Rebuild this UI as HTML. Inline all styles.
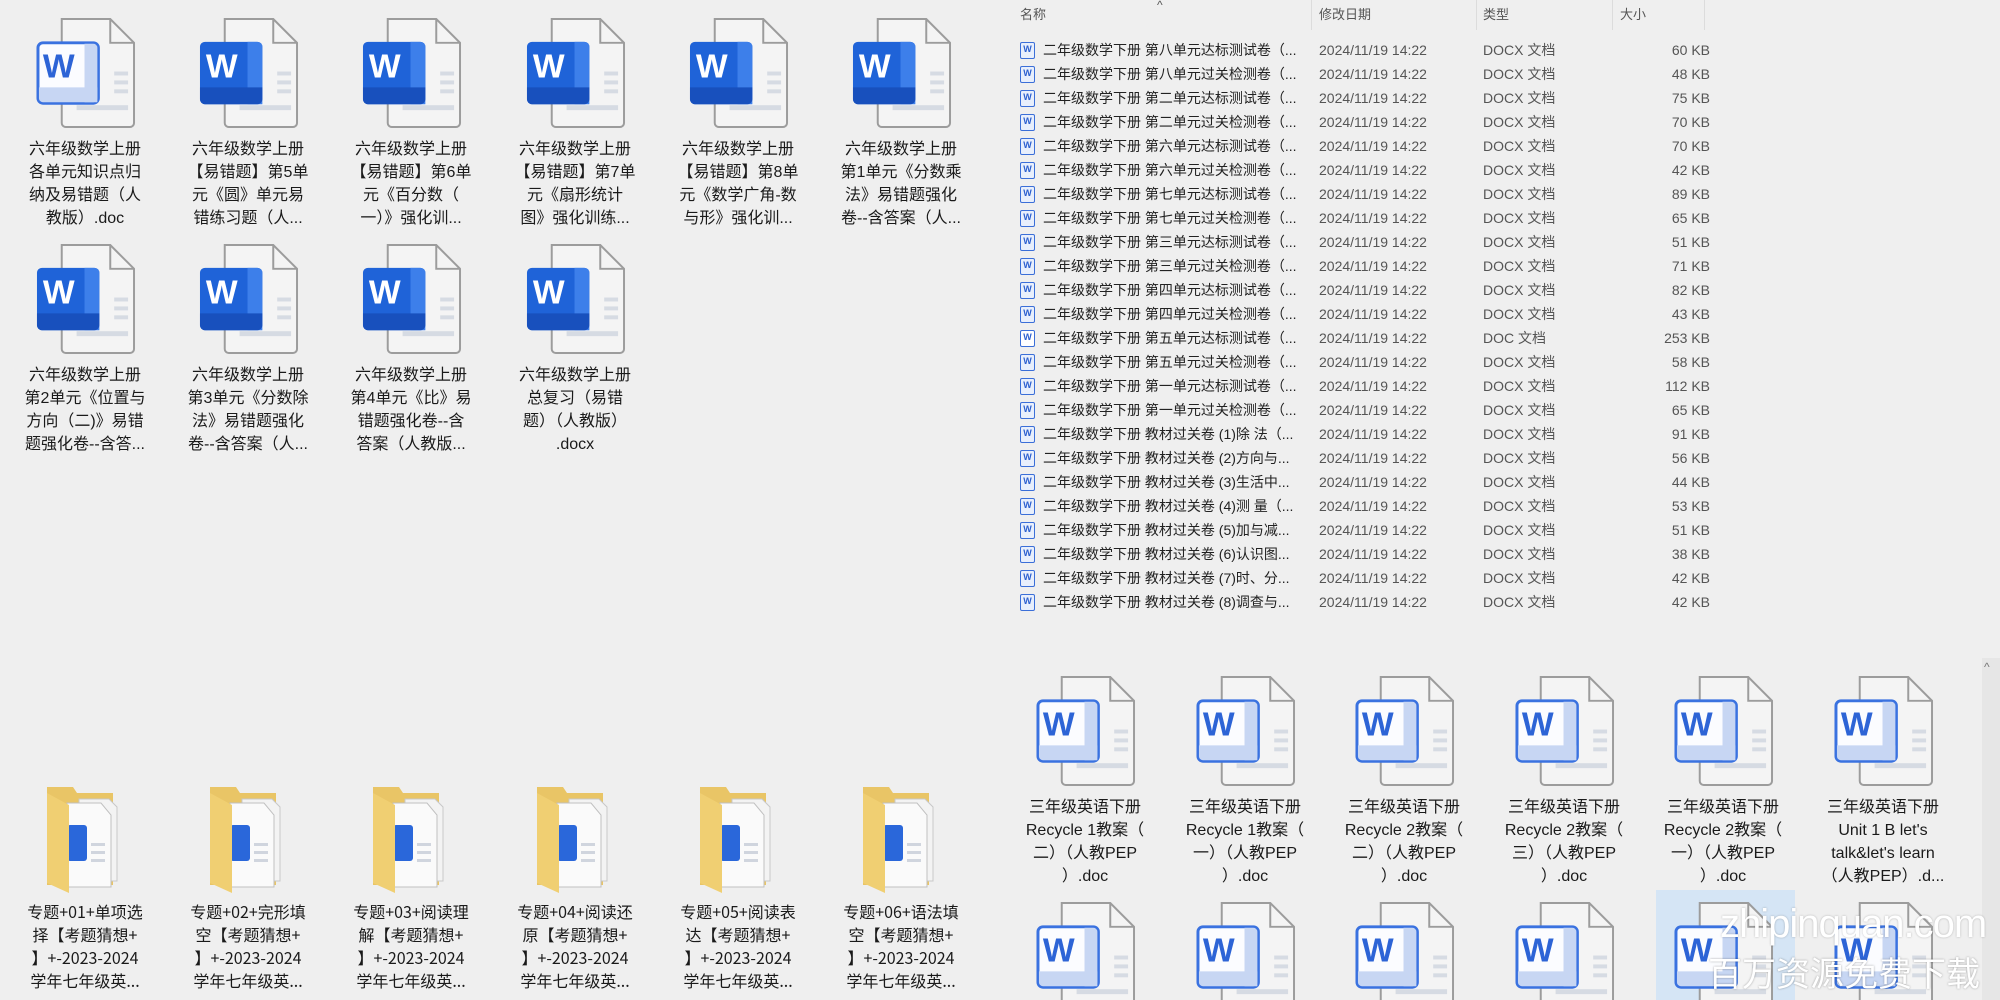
<!DOCTYPE html>
<html style="width:2000px;height:1000px;overflow:hidden"><head><meta charset="utf-8">
<style>
*{margin:0;padding:0;box-sizing:border-box}
body{width:2000px;height:1000px;background:#efefef;position:relative;overflow:hidden;font-family:"Liberation Sans","Noto Sans CJK SC",sans-serif;color:#1a1a1a}
.it{position:absolute;width:150px;text-align:center}
.it svg{display:block;margin:0 auto}
.cap{font-size:16px;line-height:23px;margin-top:9px;white-space:nowrap}
.cap2{font-size:16px;line-height:23px;margin-top:5px;white-space:nowrap;font-family:"Noto Sans CJK SC",sans-serif}
.hdr{position:absolute;top:0;height:30px;font-size:13px;color:#555;line-height:30px}
.sep{position:absolute;top:0;width:1px;height:30px;background:#dcdcdc}
.row{position:absolute;left:1020px;height:24px;font-size:14px;line-height:24px;width:690px;color:#222}
.row span{position:absolute;top:0;white-space:nowrap}
.row .ic{left:0;top:4px;width:15px;height:17px;border:1.5px solid #3b6fd8;border-radius:2px;background:#e8effc;font-size:9px;line-height:13px;text-align:center;color:#2b5fcf;font-weight:bold}
.row .n{left:23px}.row .d{left:299px;color:#555}.row .t{left:463px;color:#555}.row .s{right:0;color:#555}
</style></head><body>
<svg width="0" height="0" style="position:absolute">
<defs>
<symbol id="ds" viewBox="0 0 102 112">
<path d="M27 1H76L100 25V106a4 4 0 0 1-4 4H31a4 4 0 0 1-4-4Z" fill="#f4f4f4" stroke="#9c9c9c" stroke-width="2"/>
<path d="M76 1V25H100" fill="none" stroke="#9c9c9c" stroke-width="2"/>
<rect x="80" y="54" width="14" height="4" fill="#d6dbe3"/><rect x="80" y="63" width="14" height="4" fill="#d6dbe3"/><rect x="80" y="72" width="14" height="4" fill="#d6dbe3"/><rect x="42" y="88" width="52" height="5" fill="#d6dbe3"/>
<rect x="2" y="24" width="63" height="63" rx="5" fill="#1f63d8"/>
<path d="M50 24h10a5 5 0 0 1 5 5v58H50Z" fill="#3d7fea"/>
<path d="M2 70H65V82a5 5 0 0 1-5 5H7a5 5 0 0 1-5-5Z" fill="#1850bd"/>
<text x="24" y="60" font-family="Liberation Sans" font-weight="bold" font-size="34" fill="#fff" text-anchor="middle">W</text>
</symbol>
<symbol id="do" viewBox="0 0 102 112">
<path d="M27 1H76L100 25V106a4 4 0 0 1-4 4H31a4 4 0 0 1-4-4Z" fill="#f4f4f4" stroke="#9c9c9c" stroke-width="2"/>
<path d="M76 1V25H100" fill="none" stroke="#9c9c9c" stroke-width="2"/>
<rect x="80" y="54" width="14" height="4" fill="#d6dbe3"/><rect x="80" y="63" width="14" height="4" fill="#d6dbe3"/><rect x="80" y="72" width="14" height="4" fill="#d6dbe3"/><rect x="42" y="88" width="52" height="5" fill="#d6dbe3"/>
<rect x="3" y="25" width="61" height="61" rx="5" fill="#fbfcff" stroke="#3a72e0" stroke-width="3"/>
<path d="M50 26h9a4 4 0 0 1 4 4v55H50Z" fill="#c7d6f3"/>
<path d="M4 70H63V81a4 4 0 0 1-4 4H8a4 4 0 0 1-4-4Z" fill="#c7d6f3"/>
<text x="24" y="60" font-family="Liberation Sans" font-weight="bold" font-size="34" fill="#2d64d6" text-anchor="middle">W</text>
</symbol>
<symbol id="fo" viewBox="0 0 84 110">
<path d="M4 2H30L34 8H70V100H4Z" fill="#e9c566"/>
<path d="M36 14H66L74 22V96H36Z" fill="#f3f3f3" stroke="#c8c8c8"/>
<path d="M24 18H58L68 30V102H24Z" fill="#fafafa" stroke="#c0c0c0"/>
<rect x="24" y="40" width="20" height="36" rx="3" fill="#2a67da"/>
<rect x="48" y="58" width="14" height="3" fill="#d0d5de"/><rect x="48" y="66" width="14" height="3" fill="#d0d5de"/><rect x="48" y="74" width="14" height="3" fill="#d0d5de"/>
<path d="M4 8L26 20V108L4 98Z" fill="#f0cf72"/>
</symbol>
</defs></svg>

<div class="it" style="left:10px;top:18px"><svg width="101" height="111"><use href="#do"/></svg><div class="cap">六年级数学上册<br>各单元知识点归<br>纳及易错题（人<br>教版）.doc</div></div>
<div class="it" style="left:173px;top:18px"><svg width="101" height="111"><use href="#ds"/></svg><div class="cap">六年级数学上册<br>【易错题】第5单<br>元《圆》单元易<br>错练习题（人...</div></div>
<div class="it" style="left:336px;top:18px"><svg width="101" height="111"><use href="#ds"/></svg><div class="cap">六年级数学上册<br>【易错题】第6单<br>元《百分数（<br>一）》强化训...</div></div>
<div class="it" style="left:500px;top:18px"><svg width="101" height="111"><use href="#ds"/></svg><div class="cap">六年级数学上册<br>【易错题】第7单<br>元《扇形统计<br>图》强化训练...</div></div>
<div class="it" style="left:663px;top:18px"><svg width="101" height="111"><use href="#ds"/></svg><div class="cap">六年级数学上册<br>【易错题】第8单<br>元《数学广角-数<br>与形》强化训...</div></div>
<div class="it" style="left:826px;top:18px"><svg width="101" height="111"><use href="#ds"/></svg><div class="cap">六年级数学上册<br>第1单元《分数乘<br>法》易错题强化<br>卷--含答案（人...</div></div>
<div class="it" style="left:10px;top:244px"><svg width="101" height="111"><use href="#ds"/></svg><div class="cap">六年级数学上册<br>第2单元《位置与<br>方向（二)》易错<br>题强化卷--含答...</div></div>
<div class="it" style="left:173px;top:244px"><svg width="101" height="111"><use href="#ds"/></svg><div class="cap">六年级数学上册<br>第3单元《分数除<br>法》易错题强化<br>卷--含答案（人...</div></div>
<div class="it" style="left:336px;top:244px"><svg width="101" height="111"><use href="#ds"/></svg><div class="cap">六年级数学上册<br>第4单元《比》易<br>错题强化卷--含<br>答案（人教版...</div></div>
<div class="it" style="left:500px;top:244px"><svg width="101" height="111"><use href="#ds"/></svg><div class="cap">六年级数学上册<br>总复习（易错<br>题）（人教版）<br>.docx</div></div>

<div class="it" style="left:10px;top:785px"><svg width="84" height="110"><use href="#fo"/></svg><div class="cap2">专题+01+单项选<br>择【考题猜想+<br>】+-2023-2024<br>学年七年级英...</div></div>
<div class="it" style="left:173px;top:785px"><svg width="84" height="110"><use href="#fo"/></svg><div class="cap2">专题+02+完形填<br>空【考题猜想+<br>】+-2023-2024<br>学年七年级英...</div></div>
<div class="it" style="left:336px;top:785px"><svg width="84" height="110"><use href="#fo"/></svg><div class="cap2">专题+03+阅读理<br>解【考题猜想+<br>】+-2023-2024<br>学年七年级英...</div></div>
<div class="it" style="left:500px;top:785px"><svg width="84" height="110"><use href="#fo"/></svg><div class="cap2">专题+04+阅读还<br>原【考题猜想+<br>】+-2023-2024<br>学年七年级英...</div></div>
<div class="it" style="left:663px;top:785px"><svg width="84" height="110"><use href="#fo"/></svg><div class="cap2">专题+05+阅读表<br>达【考题猜想+<br>】+-2023-2024<br>学年七年级英...</div></div>
<div class="it" style="left:826px;top:785px"><svg width="84" height="110"><use href="#fo"/></svg><div class="cap2">专题+06+语法填<br>空【考题猜想+<br>】+-2023-2024<br>学年七年级英...</div></div>

<div class="hdr" style="left:1020px">名称</div>
<div class="hdr" style="left:1157px;top:-10px;font-size:12px">^</div>
<div class="hdr" style="left:1319px">修改日期</div>
<div class="hdr" style="left:1483px">类型</div>
<div class="hdr" style="left:1620px">大小</div>
<div class="sep" style="left:1311px"></div><div class="sep" style="left:1476px"></div><div class="sep" style="left:1612px"></div><div class="sep" style="left:1704px"></div>

<div class="row" style="top:38px"><span class="ic">W</span><span class="n">二年级数学下册  第八单元达标测试卷（...</span><span class="d">2024/11/19 14:22</span><span class="t">DOCX 文档</span><span class="s">60 KB</span></div>
<div class="row" style="top:62px"><span class="ic">W</span><span class="n">二年级数学下册  第八单元过关检测卷（...</span><span class="d">2024/11/19 14:22</span><span class="t">DOCX 文档</span><span class="s">48 KB</span></div>
<div class="row" style="top:86px"><span class="ic">W</span><span class="n">二年级数学下册  第二单元达标测试卷（...</span><span class="d">2024/11/19 14:22</span><span class="t">DOCX 文档</span><span class="s">75 KB</span></div>
<div class="row" style="top:110px"><span class="ic">W</span><span class="n">二年级数学下册  第二单元过关检测卷（...</span><span class="d">2024/11/19 14:22</span><span class="t">DOCX 文档</span><span class="s">70 KB</span></div>
<div class="row" style="top:134px"><span class="ic">W</span><span class="n">二年级数学下册  第六单元达标测试卷（...</span><span class="d">2024/11/19 14:22</span><span class="t">DOCX 文档</span><span class="s">70 KB</span></div>
<div class="row" style="top:158px"><span class="ic">W</span><span class="n">二年级数学下册  第六单元过关检测卷（...</span><span class="d">2024/11/19 14:22</span><span class="t">DOCX 文档</span><span class="s">42 KB</span></div>
<div class="row" style="top:182px"><span class="ic">W</span><span class="n">二年级数学下册  第七单元达标测试卷（...</span><span class="d">2024/11/19 14:22</span><span class="t">DOCX 文档</span><span class="s">89 KB</span></div>
<div class="row" style="top:206px"><span class="ic">W</span><span class="n">二年级数学下册  第七单元过关检测卷（...</span><span class="d">2024/11/19 14:22</span><span class="t">DOCX 文档</span><span class="s">65 KB</span></div>
<div class="row" style="top:230px"><span class="ic">W</span><span class="n">二年级数学下册  第三单元达标测试卷（...</span><span class="d">2024/11/19 14:22</span><span class="t">DOCX 文档</span><span class="s">51 KB</span></div>
<div class="row" style="top:254px"><span class="ic">W</span><span class="n">二年级数学下册  第三单元过关检测卷（...</span><span class="d">2024/11/19 14:22</span><span class="t">DOCX 文档</span><span class="s">71 KB</span></div>
<div class="row" style="top:278px"><span class="ic">W</span><span class="n">二年级数学下册  第四单元达标测试卷（...</span><span class="d">2024/11/19 14:22</span><span class="t">DOCX 文档</span><span class="s">82 KB</span></div>
<div class="row" style="top:302px"><span class="ic">W</span><span class="n">二年级数学下册  第四单元过关检测卷（...</span><span class="d">2024/11/19 14:22</span><span class="t">DOCX 文档</span><span class="s">43 KB</span></div>
<div class="row" style="top:326px"><span class="ic" style="background:#fff">W</span><span class="n">二年级数学下册  第五单元达标测试卷（...</span><span class="d">2024/11/19 14:22</span><span class="t">DOC 文档</span><span class="s">253 KB</span></div>
<div class="row" style="top:350px"><span class="ic">W</span><span class="n">二年级数学下册  第五单元过关检测卷（...</span><span class="d">2024/11/19 14:22</span><span class="t">DOCX 文档</span><span class="s">58 KB</span></div>
<div class="row" style="top:374px"><span class="ic">W</span><span class="n">二年级数学下册  第一单元达标测试卷（...</span><span class="d">2024/11/19 14:22</span><span class="t">DOCX 文档</span><span class="s">112 KB</span></div>
<div class="row" style="top:398px"><span class="ic">W</span><span class="n">二年级数学下册  第一单元过关检测卷（...</span><span class="d">2024/11/19 14:22</span><span class="t">DOCX 文档</span><span class="s">65 KB</span></div>
<div class="row" style="top:422px"><span class="ic">W</span><span class="n">二年级数学下册  教材过关卷 (1)除 法（...</span><span class="d">2024/11/19 14:22</span><span class="t">DOCX 文档</span><span class="s">91 KB</span></div>
<div class="row" style="top:446px"><span class="ic">W</span><span class="n">二年级数学下册  教材过关卷 (2)方向与...</span><span class="d">2024/11/19 14:22</span><span class="t">DOCX 文档</span><span class="s">56 KB</span></div>
<div class="row" style="top:470px"><span class="ic">W</span><span class="n">二年级数学下册  教材过关卷 (3)生活中...</span><span class="d">2024/11/19 14:22</span><span class="t">DOCX 文档</span><span class="s">44 KB</span></div>
<div class="row" style="top:494px"><span class="ic">W</span><span class="n">二年级数学下册  教材过关卷 (4)测 量（...</span><span class="d">2024/11/19 14:22</span><span class="t">DOCX 文档</span><span class="s">53 KB</span></div>
<div class="row" style="top:518px"><span class="ic">W</span><span class="n">二年级数学下册  教材过关卷 (5)加与减...</span><span class="d">2024/11/19 14:22</span><span class="t">DOCX 文档</span><span class="s">51 KB</span></div>
<div class="row" style="top:542px"><span class="ic">W</span><span class="n">二年级数学下册  教材过关卷 (6)认识图...</span><span class="d">2024/11/19 14:22</span><span class="t">DOCX 文档</span><span class="s">38 KB</span></div>
<div class="row" style="top:566px"><span class="ic">W</span><span class="n">二年级数学下册  教材过关卷 (7)时、分...</span><span class="d">2024/11/19 14:22</span><span class="t">DOCX 文档</span><span class="s">42 KB</span></div>
<div class="row" style="top:590px"><span class="ic">W</span><span class="n">二年级数学下册  教材过关卷 (8)调查与...</span><span class="d">2024/11/19 14:22</span><span class="t">DOCX 文档</span><span class="s">42 KB</span></div>

<div style="position:absolute;left:1656px;top:890px;width:139px;height:110px;background:#d5e5f5"></div>
<div class="it" style="left:1010px;top:676px"><svg width="101" height="111"><use href="#do"/></svg><div class="cap">三年级英语下册<br>Recycle 1教案（<br>二）（人教PEP<br>）.doc</div></div>
<div class="it" style="left:1170px;top:676px"><svg width="101" height="111"><use href="#do"/></svg><div class="cap">三年级英语下册<br>Recycle 1教案（<br>一）（人教PEP<br>）.doc</div></div>
<div class="it" style="left:1329px;top:676px"><svg width="101" height="111"><use href="#do"/></svg><div class="cap">三年级英语下册<br>Recycle 2教案（<br>二）（人教PEP<br>）.doc</div></div>
<div class="it" style="left:1489px;top:676px"><svg width="101" height="111"><use href="#do"/></svg><div class="cap">三年级英语下册<br>Recycle 2教案（<br>三）（人教PEP<br>）.doc</div></div>
<div class="it" style="left:1648px;top:676px"><svg width="101" height="111"><use href="#do"/></svg><div class="cap">三年级英语下册<br>Recycle 2教案（<br>一）（人教PEP<br>）.doc</div></div>
<div class="it" style="left:1808px;top:676px"><svg width="101" height="111"><use href="#do"/></svg><div class="cap">三年级英语下册<br>Unit 1 B let's<br>talk&amp;let's learn<br>（人教PEP）.d...</div></div>
<div class="it" style="left:1010px;top:902px"><svg width="101" height="111"><use href="#do"/></svg></div>
<div class="it" style="left:1170px;top:902px"><svg width="101" height="111"><use href="#do"/></svg></div>
<div class="it" style="left:1329px;top:902px"><svg width="101" height="111"><use href="#do"/></svg></div>
<div class="it" style="left:1489px;top:902px"><svg width="101" height="111"><use href="#do"/></svg></div>
<div class="it" style="left:1648px;top:902px"><svg width="101" height="111"><use href="#do"/></svg></div>
<div class="it" style="left:1808px;top:902px"><svg width="101" height="111"><use href="#do"/></svg></div>

<div style="position:absolute;left:1982px;top:658px;width:18px;height:342px;background:#e6e6e6"></div>
<div style="position:absolute;left:1984px;top:660px;font-size:12px;color:#777">^</div>

<div style="position:absolute;left:1720px;top:902px;font-size:40px;color:#fff;font-family:'Liberation Sans',sans-serif;text-shadow:0 0 2px rgba(0,0,0,.25);letter-spacing:-1px;white-space:nowrap">zhipinquan.com</div>
<div style="position:absolute;left:1708px;top:950px;font-size:34px;color:#fff;font-family:'Noto Sans CJK SC',sans-serif;text-shadow:0 0 2px rgba(0,0,0,.35);line-height:44px;white-space:nowrap">百万资源免费下载</div>
</body></html>
